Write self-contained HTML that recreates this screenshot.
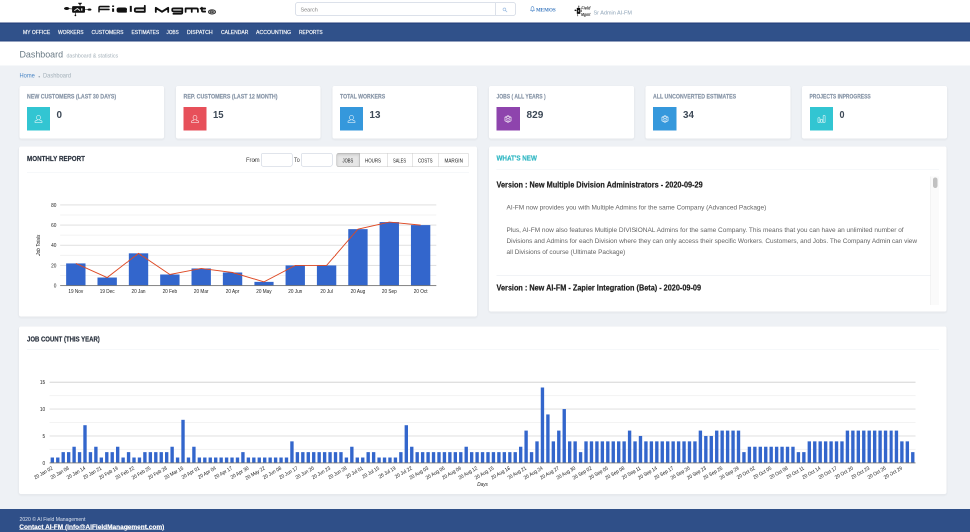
<!DOCTYPE html>
<html><head><meta charset="utf-8"><title>Dashboard</title>
<style>
html,body{margin:0;padding:0;width:970px;height:532px;overflow:hidden;background:#eef1f5;}
body{font-family:"Liberation Sans",sans-serif;}
#w{position:absolute;left:0;top:0;width:1940px;height:1064px;transform:scale(.5);transform-origin:0 0;overflow:hidden;will-change:transform;}
#w div{position:absolute;box-sizing:border-box;}
#w svg{position:absolute;overflow:visible;}
.t{position:absolute;white-space:nowrap;line-height:0;height:0;}
.p{background:#fff;box-shadow:0 2px 3px 2px rgba(0,0,0,.035);border-radius:4px;}
</style></head><body><div id="w">
<div style="left:0px;top:0px;width:1940px;height:44.6px;background:#fff;"></div>
<svg style="left:0;top:0" width="480" height="44" viewBox="0 0 240 22" fill="none" stroke="#111" stroke-linecap="round" stroke-linejoin="round">
<g stroke-width=".6"><path d="M66.7 8.5L72.2 8.9M85 9.5L89.5 9.6M80.1 3.8V6.2M75.4 12.8V15.2"/></g>
<ellipse cx="66.7" cy="8.5" rx="2.7" ry="1.5" fill="#111" stroke="none"/>
<ellipse cx="89.5" cy="9.6" rx="1.9" ry="1.05" fill="#111" stroke="none"/>
<path d="M78.3 3.0H81.9L80.1 4.9Z" fill="#111" stroke="#111" stroke-width=".4"/>
<circle cx="75.4" cy="15.4" r=".85" fill="#111" stroke="none"/>
<rect x="72.1" y="6.1" width="12.9" height="6.7" rx="1" fill="#111" stroke="none"/>
<path d="M74.3 10.8L77.4 8.5L80 10.6" stroke="#e8e8e8" stroke-width=".95" stroke-linecap="butt" stroke-linejoin="round"/><path d="M81.75 8.3V10.7" stroke="#fff" stroke-width="1.15" stroke-linecap="butt"/>
<g stroke-width="1.8" transform="translate(0 9.3) scale(1 1.1) translate(0 -9.3)">
<path d="M99 11.5V8.0Q99 6.85 100.2 6.85H109M99 9.45H109" stroke-width="1.45"/>
<path d="M113.1 8.5V11.6" stroke-width="2.0" stroke-linecap="butt"/>
<path d="M112.1 6.5H114.1" stroke-width="1.3" stroke-linecap="butt"/>
<path d="M126.2 11.5H118.9Q117.4 11.5 117.4 10.4V9.6Q117.4 8.5 118.9 8.5H124.7Q126.2 8.5 126.2 9.4V10H117.6" fill="#c8c8c8" stroke-width="1.6"/>
<path d="M130.8 6.2V11.6" stroke-width="2.0" stroke-linecap="butt"/>
<path d="M144.8 6.2V11.5H136.3Q134.8 11.5 134.8 10.4V9.6Q134.8 8.5 136.3 8.5H144.8"/>
<path d="M155.8 11.6V8L162 11.5L168.2 8V11.6" stroke-width="1.8"/>
<path d="M182.3 8.5H173.7Q172.2 8.5 172.2 9.5V10.2Q172.2 11.2 173.7 11.2H182.3V8.5V12.2Q182.3 13.3 180.8 13.3H173.4" stroke-width="1.7"/>
<path d="M185.6 11.6V8.5H196.5Q197.9 8.5 197.9 9.6V11.6M191.75 8.5V11.6" stroke-width="1.75"/>
<path d="M201.9 7.8V10.4Q201.9 11.4 203.1 11.4H205.2M200.6 8.6H205.2" stroke-width="1.7"/>
</g>
<ellipse cx="212" cy="11.9" rx="3.7" ry="2.2" fill="#9a9a9a" stroke="#222" stroke-width=".7"/>
<path d="M210.6 13V10.8H212.3Q213.2 10.8 213.2 11.45Q213.2 12.1 212.3 12.1H210.6M212.2 12.1L213.3 13" stroke="#222" stroke-width=".55"/>
</svg>

<div style="left:591px;top:5px;width:401.2px;height:26.2px;background:#fff;border:1px solid #bac4d6;border-radius:3px 0 0 3px;"></div>
<div style="left:991.2px;top:5px;width:40.2px;height:26.2px;background:#fff;border:1px solid #bac4d6;border-radius:0 3px 3px 0;"></div>
<span id="t1" class="t" style="left:601px;top:19.19px;font-size:11px;color:#858585;transform:scaleX(0.9926);transform-origin:0 0;">Search</span>
<svg style="left:1005.4px;top:14.6px" width="10" height="10" viewBox="0 0 10 10"><circle cx="3.8" cy="3.8" r="2.8" fill="none" stroke="#9dbde2" stroke-width="1.3"/><path d="M6 6L8.8 8.8" stroke="#9dbde2" stroke-width="1.5" stroke-linecap="round"/></svg>
<svg style="left:1059.6px;top:12.2px" width="10" height="12" viewBox="0 0 10 12"><path d="M5 1.3C3 1.3 2.2 2.9 2.2 4.7V7L1.1 8.9H8.9L7.8 7V4.7C7.8 2.9 7 1.3 5 1.3Z" fill="none" stroke="#4a86c9" stroke-width="1.1"/><path d="M3.9 10.1a1.1 1.1 0 0 0 2.2 0M5 .3V1.3" fill="none" stroke="#4a86c9" stroke-width="1"/></svg>
<span id="t2" class="t" style="left:1072.4px;top:19.83px;font-size:10.6px;color:#3a78bf;font-weight:700;font-family:'Liberation Serif',serif;transform:scaleX(0.9562);transform-origin:0 0;">MEMOS</span>
<svg style="left:1140px;top:0" width="60" height="40" viewBox="570 0 30 20" font-family="Liberation Sans, sans-serif">
<rect x="576.8" y="7.9" width="3.5" height="6" rx=".4" fill="#111"/>
<rect x="577.9" y="10.1" width="1.3" height="1.7" fill="#aaa"/>
<path d="M575.3 10.4H576.9M580.1 11H581.4M578.8 6.4V8.1M577.7 13.8V15.6" stroke="#222" stroke-width=".5"/>
<circle cx="575.3" cy="10.3" r=".8" fill="#111"/><circle cx="581.4" cy="11" r=".6" fill="#111"/>
<circle cx="578.8" cy="6.2" r=".6" fill="#333"/><circle cx="577.7" cy="15.7" r=".5" fill="#555"/>
<text transform="translate(581.3 9.4) scale(.8 1)" font-size="4.9" font-weight="700" font-style="italic" fill="#333">Field</text>
<text transform="translate(581.0 16.0) scale(.72 1)" font-size="4.9" font-weight="700" font-style="italic" fill="#333">Mgmt</text>
</svg>

<span id="t3" class="t" style="left:1187.2px;top:24.79px;font-size:11px;color:#8ea4b8;transform:scaleX(0.9996);transform-origin:0 0;">Sr Admin AI-FM</span>
<div style="left:0px;top:44.6px;width:1940px;height:38.8px;background:#30518a;border-top:2.6px solid #213c78;border-bottom:2px solid #27447f;"></div>
<span id="t4" class="t" style="left:45.8px;top:64.15px;font-size:11.4px;color:#fff;transform:scaleX(0.8801);transform-origin:0 0;-webkit-text-stroke:.3px #fff;">MY OFFICE</span>
<span id="t5" class="t" style="left:116.4px;top:64.15px;font-size:11.4px;color:#fff;transform:scaleX(0.8699);transform-origin:0 0;-webkit-text-stroke:.3px #fff;">WORKERS</span>
<span id="t6" class="t" style="left:182.8px;top:64.15px;font-size:11.4px;color:#fff;transform:scaleX(0.8818);transform-origin:0 0;-webkit-text-stroke:.3px #fff;">CUSTOMERS</span>
<span id="t7" class="t" style="left:262.6px;top:64.15px;font-size:11.4px;color:#fff;transform:scaleX(0.8694);transform-origin:0 0;-webkit-text-stroke:.3px #fff;">ESTIMATES</span>
<span id="t8" class="t" style="left:333.4px;top:64.15px;font-size:11.4px;color:#fff;transform:scaleX(0.8197);transform-origin:0 0;-webkit-text-stroke:.3px #fff;">JOBS</span>
<span id="t9" class="t" style="left:374.4px;top:64.15px;font-size:11.4px;color:#fff;transform:scaleX(0.9194);transform-origin:0 0;-webkit-text-stroke:.3px #fff;">DISPATCH</span>
<span id="t10" class="t" style="left:441.6px;top:64.15px;font-size:11.4px;color:#fff;transform:scaleX(0.8834);transform-origin:0 0;-webkit-text-stroke:.3px #fff;">CALENDAR</span>
<span id="t11" class="t" style="left:512px;top:64.15px;font-size:11.4px;color:#fff;transform:scaleX(0.9167);transform-origin:0 0;-webkit-text-stroke:.3px #fff;">ACCOUNTING</span>
<span id="t12" class="t" style="left:598px;top:64.15px;font-size:11.4px;color:#fff;transform:scaleX(0.8604);transform-origin:0 0;-webkit-text-stroke:.3px #fff;">REPORTS</span>
<div style="left:0px;top:83.4px;width:1940px;height:47.8px;background:#fff;"></div>
<span id="t13" class="t" style="left:39.3px;top:108.76px;font-size:18.3px;color:#6a7a85;transform:scaleX(0.9739);transform-origin:0 0;">Dashboard</span>
<span id="t14" class="t" style="left:132.6px;top:111.02px;font-size:11.5px;color:#a3b0b9;transform:scaleX(0.9172);transform-origin:0 0;">dashboard &amp; statistics</span>
<span id="t15" class="t" style="left:38.8px;top:150.94px;font-size:12px;color:#4a86c5;transform:scaleX(0.9589);transform-origin:0 0;">Home</span>
<div style="left:77.2px;top:152px;width:2.8px;height:2.8px;background:#9aa7b3;border-radius:50%;"></div>
<span id="t16" class="t" style="left:85.6px;top:150.94px;font-size:12px;color:#a3b0b9;transform:scaleX(0.9571);transform-origin:0 0;">Dashboard</span>
<div class="p" style="left:38.6px;top:171.6px;width:289.6px;height:105px;"></div>
<span id="t17" class="t" style="left:53.8px;top:192.84px;font-size:12px;color:#8896a8;font-weight:700;transform:scaleX(0.8801);transform-origin:0 0;-webkit-text-stroke:.35px #8896a8;">NEW CUSTOMERS (LAST 30 DAYS)</span>
<div style="left:54px;top:214.2px;width:46.2px;height:46.8px;background:#32c5d2;"></div>
<svg style="left:69.1px;top:229.9px" width="16" height="16" viewBox="0 0 16 16" fill="none" stroke="#fff" stroke-opacity=".85" stroke-width="1.25" stroke-linejoin="round"><ellipse cx="8" cy="5.2" rx="3.9" ry="4.5"/><path d="M5.6 8.9V10.3C5.6 11 1 11 1 12.7V15.1H15V12.7C15 11 10.4 11 10.4 10.3V8.9"/></svg>
<span id="t18" class="t" style="left:113.2px;top:229.03px;font-size:20.7px;color:#3d4957;font-weight:700;transform:scaleX(0.9552);transform-origin:0 0;">0</span>
<div class="p" style="left:351.72px;top:171.6px;width:289.6px;height:105px;"></div>
<span id="t19" class="t" style="left:366.92px;top:192.84px;font-size:12px;color:#8896a8;font-weight:700;transform:scaleX(0.8830);transform-origin:0 0;-webkit-text-stroke:.35px #8896a8;">REP. CUSTOMERS (LAST 12 MONTH)</span>
<div style="left:367.12px;top:214.2px;width:46.2px;height:46.8px;background:#e7505a;"></div>
<svg style="left:382.22px;top:229.9px" width="16" height="16" viewBox="0 0 16 16" fill="none" stroke="#fff" stroke-opacity=".85" stroke-width="1.25" stroke-linejoin="round"><ellipse cx="8" cy="5.2" rx="3.9" ry="4.5"/><path d="M5.6 8.9V10.3C5.6 11 1 11 1 12.7V15.1H15V12.7C15 11 10.4 11 10.4 10.3V8.9"/></svg>
<span id="t20" class="t" style="left:426.32px;top:229.03px;font-size:20.7px;color:#3d4957;font-weight:700;transform:scaleX(0.9211);transform-origin:0 0;">15</span>
<div class="p" style="left:664.84px;top:171.6px;width:289.6px;height:105px;"></div>
<span id="t21" class="t" style="left:680.04px;top:192.84px;font-size:12px;color:#8896a8;font-weight:700;transform:scaleX(0.8637);transform-origin:0 0;-webkit-text-stroke:.35px #8896a8;">TOTAL WORKERS</span>
<div style="left:680.24px;top:214.2px;width:46.2px;height:46.8px;background:#3598dc;"></div>
<svg style="left:695.34px;top:229.9px" width="16" height="16" viewBox="0 0 16 16" fill="none" stroke="#fff" stroke-opacity=".85" stroke-width="1.25" stroke-linejoin="round"><ellipse cx="8" cy="5.2" rx="3.9" ry="4.5"/><path d="M5.6 8.9V10.3C5.6 11 1 11 1 12.7V15.1H15V12.7C15 11 10.4 11 10.4 10.3V8.9"/></svg>
<span id="t22" class="t" style="left:739.44px;top:229.03px;font-size:20.7px;color:#3d4957;font-weight:700;transform:scaleX(0.9472);transform-origin:0 0;">13</span>
<div class="p" style="left:977.96px;top:171.6px;width:289.6px;height:105px;"></div>
<span id="t23" class="t" style="left:993.16px;top:192.84px;font-size:12px;color:#8896a8;font-weight:700;transform:scaleX(0.8353);transform-origin:0 0;-webkit-text-stroke:.35px #8896a8;">JOBS ( ALL YEARS )</span>
<div style="left:993.36px;top:214.2px;width:46.2px;height:46.8px;background:#8e44ad;"></div>
<svg style="left:1008.46px;top:229.9px" width="16" height="16" viewBox="0 0 16 16" fill="none" stroke="#fff" stroke-opacity=".85" stroke-width="1.25" stroke-linejoin="round"><path d="M8 1L14.2 4.2V11.8L8 15L1.8 11.8V4.2Z"/><path d="M3.2 5.2L8 7.6L12.8 5.2L8 2.9Z"/><path d="M3.2 8.3L8 10.7L12.8 8.3"/><path d="M3.2 11.2L8 13.5L12.8 11.2"/></svg>
<span id="t24" class="t" style="left:1052.56px;top:229.03px;font-size:20.7px;color:#3d4957;font-weight:700;transform:scaleX(0.9730);transform-origin:0 0;">829</span>
<div class="p" style="left:1291.08px;top:171.6px;width:289.6px;height:105px;"></div>
<span id="t25" class="t" style="left:1306.28px;top:192.84px;font-size:12px;color:#8896a8;font-weight:700;transform:scaleX(0.8737);transform-origin:0 0;-webkit-text-stroke:.35px #8896a8;">ALL UNCONVERTED ESTIMATES</span>
<div style="left:1306.48px;top:214.2px;width:46.2px;height:46.8px;background:#3598dc;"></div>
<svg style="left:1321.58px;top:229.9px" width="16" height="16" viewBox="0 0 16 16" fill="none" stroke="#fff" stroke-opacity=".85" stroke-width="1.25" stroke-linejoin="round"><path d="M8 1L14.2 4.2V11.8L8 15L1.8 11.8V4.2Z"/><path d="M3.2 5.2L8 7.6L12.8 5.2L8 2.9Z"/><path d="M3.2 8.3L8 10.7L12.8 8.3"/><path d="M3.2 11.2L8 13.5L12.8 11.2"/></svg>
<span id="t26" class="t" style="left:1365.68px;top:229.03px;font-size:20.7px;color:#3d4957;font-weight:700;transform:scaleX(0.9472);transform-origin:0 0;">34</span>
<div class="p" style="left:1604.2px;top:171.6px;width:289.6px;height:105px;"></div>
<span id="t27" class="t" style="left:1619.4px;top:192.84px;font-size:12px;color:#8896a8;font-weight:700;transform:scaleX(0.8269);transform-origin:0 0;-webkit-text-stroke:.35px #8896a8;">PROJECTS INPROGRESS</span>
<div style="left:1619.6px;top:214.2px;width:46.2px;height:46.8px;background:#32c5d2;"></div>
<svg style="left:1634.7px;top:229.9px" width="16" height="16" viewBox="0 0 16 16" fill="none" stroke="#fff" stroke-opacity=".85" stroke-width="1.25" stroke-linejoin="round"><rect x="0.9" y="5.3" width="3.9" height="9.8" rx="1.2"/><rect x="6.1" y="8.7" width="3.9" height="6.4" rx="1.2"/><rect x="11.3" y="0.9" width="3.9" height="14.2" rx="1.2"/></svg>
<span id="t28" class="t" style="left:1678.8px;top:229.03px;font-size:20.7px;color:#3d4957;font-weight:700;transform:scaleX(0.8684);transform-origin:0 0;">0</span>
<div class="p" style="left:38.4px;top:293.4px;width:915.8px;height:339.8px;"></div>
<span id="t29" class="t" style="left:53.6px;top:316.95px;font-size:14px;color:#2c3440;font-weight:700;transform:scaleX(0.8930);transform-origin:0 0;-webkit-text-stroke:.4px #2c3440;">MONTHLY REPORT</span>
<div style="left:53.6px;top:343.8px;width:884.8px;height:1.2px;background:#eef1f5;"></div>
<span id="t30" class="t" style="left:492.4px;top:320.07px;font-size:12.5px;color:#444;transform:scaleX(0.9324);transform-origin:0 0;">From</span>
<div style="left:522px;top:306.4px;width:63px;height:26.4px;background:#fff;border:1px solid #c2cad8;border-radius:4px;"></div>
<span id="t31" class="t" style="left:588.4px;top:320.07px;font-size:12.5px;color:#444;transform:scaleX(0.8634);transform-origin:0 0;">To</span>
<div style="left:602.2px;top:306.4px;width:63px;height:26.4px;background:#fff;border:1px solid #c2cad8;border-radius:4px;"></div>
<div style="left:672.6px;top:306.4px;width:47px;height:27.2px;background:#e6e6e6;border:1px solid #adadad;box-shadow:inset 0 3px 5px rgba(0,0,0,.125);border-radius:4px 0 0 4px;"></div>
<div style="left:719.6px;top:306.4px;width:56px;height:27.2px;background:#fff;border:1px solid #ccc;border-left:none;"></div>
<div style="left:775.6px;top:306.4px;width:50px;height:27.2px;background:#fff;border:1px solid #ccc;border-left:none;"></div>
<div style="left:825.6px;top:306.4px;width:52px;height:27.2px;background:#fff;border:1px solid #ccc;border-left:none;"></div>
<div style="left:877.6px;top:306.4px;width:60.8px;height:27.2px;background:#fff;border:1px solid #ccc;border-radius:0 4px 4px 0;border-left:none;"></div>
<span id="t32" class="t" style="left:685.4px;top:321.16px;font-size:10.5px;color:#222;transform:scaleX(0.7872);transform-origin:0 0;">JOBS</span>
<span id="t33" class="t" style="left:730.2px;top:321.16px;font-size:10.5px;color:#222;transform:scaleX(0.8438);transform-origin:0 0;">HOURS</span>
<span id="t34" class="t" style="left:786.2px;top:321.16px;font-size:10.5px;color:#222;transform:scaleX(0.7738);transform-origin:0 0;">SALES</span>
<span id="t35" class="t" style="left:836.4px;top:321.16px;font-size:10.5px;color:#222;transform:scaleX(0.8017);transform-origin:0 0;">COSTS</span>
<span id="t36" class="t" style="left:889.2px;top:321.16px;font-size:10.5px;color:#222;transform:scaleX(0.8762);transform-origin:0 0;">MARGIN</span>
<svg style="left:0;top:0" width="1940" height="700" font-family="Liberation Sans, sans-serif"><rect x="120.30" y="550.03" width="752.30" height="2" fill="#f3f3f3"/><rect x="120.30" y="529.86" width="752.30" height="2" fill="#e0e0e0"/><rect x="120.30" y="509.69" width="752.30" height="2" fill="#f3f3f3"/><rect x="120.30" y="489.52" width="752.30" height="2" fill="#e0e0e0"/><rect x="120.30" y="469.35" width="752.30" height="2" fill="#f3f3f3"/><rect x="120.30" y="449.18" width="752.30" height="2" fill="#e0e0e0"/><rect x="120.30" y="429.01" width="752.30" height="2" fill="#f3f3f3"/><rect x="120.30" y="408.84" width="752.30" height="2" fill="#e0e0e0"/><rect x="132.27" y="526.83" width="38.74" height="44.37" fill="#3366cc"/><rect x="194.97" y="555.06" width="38.74" height="16.14" fill="#3366cc"/><rect x="257.66" y="506.66" width="38.74" height="64.54" fill="#3366cc"/><rect x="320.35" y="549.01" width="38.74" height="22.19" fill="#3366cc"/><rect x="383.04" y="536.91" width="38.74" height="34.29" fill="#3366cc"/><rect x="445.73" y="544.98" width="38.74" height="26.22" fill="#3366cc"/><rect x="508.42" y="563.74" width="38.74" height="7.46" fill="#3366cc"/><rect x="571.12" y="530.86" width="38.74" height="40.34" fill="#3366cc"/><rect x="633.81" y="530.86" width="38.74" height="40.34" fill="#3366cc"/><rect x="696.50" y="458.25" width="38.74" height="112.95" fill="#3366cc"/><rect x="759.19" y="444.13" width="38.74" height="127.07" fill="#3366cc"/><rect x="821.88" y="450.18" width="38.74" height="121.02" fill="#3366cc"/><rect x="120.30" y="570.30" width="752.30" height="1.8" fill="#777"/><polyline points="151.65,526.83 214.34,555.06 277.03,506.66 339.72,549.01 402.41,536.91 465.10,544.98 527.80,563.74 590.49,530.86 653.18,530.86 715.87,458.25 778.56,444.13 841.25,450.18" fill="none" stroke="#de4a25" stroke-width="1.9"/><text transform="translate(151.65 585.80) scale(.9 1)" text-anchor="middle" font-size="10.4" fill="#222">19 Nov</text><text transform="translate(214.34 585.80) scale(.9 1)" text-anchor="middle" font-size="10.4" fill="#222">19 Dec</text><text transform="translate(277.03 585.80) scale(.9 1)" text-anchor="middle" font-size="10.4" fill="#222">20 Jan</text><text transform="translate(339.72 585.80) scale(.9 1)" text-anchor="middle" font-size="10.4" fill="#222">20 Feb</text><text transform="translate(402.41 585.80) scale(.9 1)" text-anchor="middle" font-size="10.4" fill="#222">20 Mar</text><text transform="translate(465.10 585.80) scale(.9 1)" text-anchor="middle" font-size="10.4" fill="#222">20 Apr</text><text transform="translate(527.80 585.80) scale(.9 1)" text-anchor="middle" font-size="10.4" fill="#222">20 May</text><text transform="translate(590.49 585.80) scale(.9 1)" text-anchor="middle" font-size="10.4" fill="#222">20 Jun</text><text transform="translate(653.18 585.80) scale(.9 1)" text-anchor="middle" font-size="10.4" fill="#222">20 Jul</text><text transform="translate(715.87 585.80) scale(.9 1)" text-anchor="middle" font-size="10.4" fill="#222">20 Aug</text><text transform="translate(778.56 585.80) scale(.9 1)" text-anchor="middle" font-size="10.4" fill="#222">20 Sep</text><text transform="translate(841.25 585.80) scale(.9 1)" text-anchor="middle" font-size="10.4" fill="#222">20 Oct</text><text transform="translate(112.80 574.90) scale(.9 1)" text-anchor="end" font-size="10.6" fill="#222">0</text><text transform="translate(112.80 534.56) scale(.9 1)" text-anchor="end" font-size="10.6" fill="#222">20</text><text transform="translate(112.80 494.22) scale(.9 1)" text-anchor="end" font-size="10.6" fill="#222">40</text><text transform="translate(112.80 453.88) scale(.9 1)" text-anchor="end" font-size="10.6" fill="#222">60</text><text transform="translate(112.80 413.54) scale(.9 1)" text-anchor="end" font-size="10.6" fill="#222">80</text><text transform="translate(80.20 490.40) rotate(-90) scale(.9 1)" text-anchor="middle" font-size="10.4" font-style="italic" fill="#222">Job Totals</text></svg>
<div class="p" style="left:977.8px;top:293.4px;width:915.6px;height:329.8px;"></div>
<span id="t37" class="t" style="left:993.2px;top:316.35px;font-size:14px;color:#32b8c4;font-weight:700;transform:scaleX(0.8961);transform-origin:0 0;-webkit-text-stroke:.4px #32b8c4;">WHAT'S NEW</span>
<div style="left:993.2px;top:338px;width:885px;height:1.2px;background:#eef1f5;"></div>
<div style="left:1860.8px;top:352.8px;width:17.4px;height:257.2px;background:#fafafa;border-left:1px solid #e8e8e8;"></div>
<div style="left:1865.8px;top:354.6px;width:9px;height:21px;background:#c1c1c1;border-radius:5px;"></div>
<span id="t38" class="t" style="left:993.2px;top:369.66px;font-size:16px;color:#222;font-weight:700;transform:scaleX(0.9160);transform-origin:0 0;-webkit-text-stroke:.4px #222;">Version : New Multiple Division Administrators - 2020-09-29</span>
<span id="t39" class="t" style="left:1013px;top:415.30px;font-size:13px;color:#646464;transform:scaleX(0.9974);transform-origin:0 0;">AI-FM now provides you with Multiple Admins for the same Company (Advanced Package)</span>
<span id="t40" class="t" style="left:1013px;top:459.90px;font-size:13px;color:#646464;letter-spacing:0.003px;">Plus, AI-FM now also features Multiple DIVISIONAL Admins for the same Company. This means that you can have an unlimited number of</span>
<span id="t41" class="t" style="left:1013px;top:481.70px;font-size:13px;color:#646464;transform:scaleX(0.9930);transform-origin:0 0;">Divisions and Admins for each Division where they can only access their specific Workers, Customers, and Jobs. The Company Admin can view</span>
<span id="t42" class="t" style="left:1013px;top:504.10px;font-size:13px;color:#646464;transform:scaleX(0.9905);transform-origin:0 0;">all Divisions of course (Ultimate Package)</span>
<div style="left:993.2px;top:549.6px;width:867.6px;height:1.2px;background:#e4e8ee;"></div>
<span id="t43" class="t" style="left:993.2px;top:575.86px;font-size:16px;color:#222;font-weight:700;transform:scaleX(0.9122);transform-origin:0 0;-webkit-text-stroke:.4px #222;">Version : New AI-FM - Zapier Integration (Beta) - 2020-09-09</span>
<div class="p" style="left:38.4px;top:653.4px;width:1855px;height:334.6px;"></div>
<span id="t44" class="t" style="left:53.6px;top:677.55px;font-size:14px;color:#2c3440;font-weight:700;transform:scaleX(0.8560);transform-origin:0 0;-webkit-text-stroke:.4px #2c3440;">JOB COUNT (THIS YEAR)</span>
<div style="left:53.6px;top:697.8px;width:1824.6px;height:1.2px;background:#eef1f5;"></div>
<svg style="left:0;top:0" width="1940" height="1064" font-family="Liberation Sans, sans-serif"><rect x="99.20" y="897.88" width="1731.80" height="2" fill="#f3f3f3"/><rect x="99.20" y="870.95" width="1731.80" height="2" fill="#e0e0e0"/><rect x="99.20" y="844.02" width="1731.80" height="2" fill="#f3f3f3"/><rect x="99.20" y="817.10" width="1731.80" height="2" fill="#e0e0e0"/><rect x="99.20" y="790.17" width="1731.80" height="2" fill="#f3f3f3"/><rect x="99.20" y="763.25" width="1731.80" height="2" fill="#e0e0e0"/><rect x="101.28" y="915.03" width="6.73" height="10.77" fill="#3366cc"/><rect x="112.17" y="915.03" width="6.73" height="10.77" fill="#3366cc"/><rect x="123.06" y="904.26" width="6.73" height="21.54" fill="#3366cc"/><rect x="133.96" y="904.26" width="6.73" height="21.54" fill="#3366cc"/><rect x="144.85" y="893.49" width="6.73" height="32.31" fill="#3366cc"/><rect x="155.74" y="904.26" width="6.73" height="21.54" fill="#3366cc"/><rect x="166.63" y="850.41" width="6.73" height="75.39" fill="#3366cc"/><rect x="177.52" y="904.26" width="6.73" height="21.54" fill="#3366cc"/><rect x="188.41" y="893.49" width="6.73" height="32.31" fill="#3366cc"/><rect x="199.31" y="915.03" width="6.73" height="10.77" fill="#3366cc"/><rect x="210.20" y="904.26" width="6.73" height="21.54" fill="#3366cc"/><rect x="221.09" y="904.26" width="6.73" height="21.54" fill="#3366cc"/><rect x="231.98" y="893.49" width="6.73" height="32.31" fill="#3366cc"/><rect x="242.87" y="915.03" width="6.73" height="10.77" fill="#3366cc"/><rect x="253.77" y="904.26" width="6.73" height="21.54" fill="#3366cc"/><rect x="264.66" y="915.03" width="6.73" height="10.77" fill="#3366cc"/><rect x="275.55" y="915.03" width="6.73" height="10.77" fill="#3366cc"/><rect x="286.44" y="904.26" width="6.73" height="21.54" fill="#3366cc"/><rect x="297.33" y="904.26" width="6.73" height="21.54" fill="#3366cc"/><rect x="308.22" y="904.26" width="6.73" height="21.54" fill="#3366cc"/><rect x="319.12" y="904.26" width="6.73" height="21.54" fill="#3366cc"/><rect x="330.01" y="904.26" width="6.73" height="21.54" fill="#3366cc"/><rect x="340.90" y="893.49" width="6.73" height="32.31" fill="#3366cc"/><rect x="351.79" y="915.03" width="6.73" height="10.77" fill="#3366cc"/><rect x="362.68" y="839.64" width="6.73" height="86.16" fill="#3366cc"/><rect x="373.58" y="915.03" width="6.73" height="10.77" fill="#3366cc"/><rect x="384.47" y="893.49" width="6.73" height="32.31" fill="#3366cc"/><rect x="395.36" y="915.03" width="6.73" height="10.77" fill="#3366cc"/><rect x="406.25" y="915.03" width="6.73" height="10.77" fill="#3366cc"/><rect x="417.14" y="915.03" width="6.73" height="10.77" fill="#3366cc"/><rect x="428.04" y="915.03" width="6.73" height="10.77" fill="#3366cc"/><rect x="438.93" y="915.03" width="6.73" height="10.77" fill="#3366cc"/><rect x="449.82" y="915.03" width="6.73" height="10.77" fill="#3366cc"/><rect x="460.71" y="915.03" width="6.73" height="10.77" fill="#3366cc"/><rect x="471.60" y="915.03" width="6.73" height="10.77" fill="#3366cc"/><rect x="482.49" y="904.26" width="6.73" height="21.54" fill="#3366cc"/><rect x="493.39" y="915.03" width="6.73" height="10.77" fill="#3366cc"/><rect x="504.28" y="915.03" width="6.73" height="10.77" fill="#3366cc"/><rect x="515.17" y="915.03" width="6.73" height="10.77" fill="#3366cc"/><rect x="526.06" y="915.03" width="6.73" height="10.77" fill="#3366cc"/><rect x="536.95" y="915.03" width="6.73" height="10.77" fill="#3366cc"/><rect x="547.85" y="915.03" width="6.73" height="10.77" fill="#3366cc"/><rect x="558.74" y="915.03" width="6.73" height="10.77" fill="#3366cc"/><rect x="569.63" y="915.03" width="6.73" height="10.77" fill="#3366cc"/><rect x="580.52" y="882.72" width="6.73" height="43.08" fill="#3366cc"/><rect x="591.41" y="904.26" width="6.73" height="21.54" fill="#3366cc"/><rect x="602.30" y="904.26" width="6.73" height="21.54" fill="#3366cc"/><rect x="613.20" y="904.26" width="6.73" height="21.54" fill="#3366cc"/><rect x="624.09" y="904.26" width="6.73" height="21.54" fill="#3366cc"/><rect x="634.98" y="904.26" width="6.73" height="21.54" fill="#3366cc"/><rect x="645.87" y="904.26" width="6.73" height="21.54" fill="#3366cc"/><rect x="656.76" y="904.26" width="6.73" height="21.54" fill="#3366cc"/><rect x="667.66" y="904.26" width="6.73" height="21.54" fill="#3366cc"/><rect x="678.55" y="904.26" width="6.73" height="21.54" fill="#3366cc"/><rect x="689.44" y="915.03" width="6.73" height="10.77" fill="#3366cc"/><rect x="700.33" y="893.49" width="6.73" height="32.31" fill="#3366cc"/><rect x="711.22" y="915.03" width="6.73" height="10.77" fill="#3366cc"/><rect x="722.11" y="915.03" width="6.73" height="10.77" fill="#3366cc"/><rect x="733.01" y="904.26" width="6.73" height="21.54" fill="#3366cc"/><rect x="743.90" y="904.26" width="6.73" height="21.54" fill="#3366cc"/><rect x="754.79" y="915.03" width="6.73" height="10.77" fill="#3366cc"/><rect x="765.68" y="915.03" width="6.73" height="10.77" fill="#3366cc"/><rect x="776.57" y="915.03" width="6.73" height="10.77" fill="#3366cc"/><rect x="787.47" y="915.03" width="6.73" height="10.77" fill="#3366cc"/><rect x="798.36" y="904.26" width="6.73" height="21.54" fill="#3366cc"/><rect x="809.25" y="850.41" width="6.73" height="75.39" fill="#3366cc"/><rect x="820.14" y="893.49" width="6.73" height="32.31" fill="#3366cc"/><rect x="831.03" y="904.26" width="6.73" height="21.54" fill="#3366cc"/><rect x="841.92" y="904.26" width="6.73" height="21.54" fill="#3366cc"/><rect x="852.82" y="904.26" width="6.73" height="21.54" fill="#3366cc"/><rect x="863.71" y="904.26" width="6.73" height="21.54" fill="#3366cc"/><rect x="874.60" y="904.26" width="6.73" height="21.54" fill="#3366cc"/><rect x="885.49" y="904.26" width="6.73" height="21.54" fill="#3366cc"/><rect x="896.38" y="904.26" width="6.73" height="21.54" fill="#3366cc"/><rect x="907.28" y="904.26" width="6.73" height="21.54" fill="#3366cc"/><rect x="918.17" y="904.26" width="6.73" height="21.54" fill="#3366cc"/><rect x="929.06" y="893.49" width="6.73" height="32.31" fill="#3366cc"/><rect x="939.95" y="904.26" width="6.73" height="21.54" fill="#3366cc"/><rect x="950.84" y="904.26" width="6.73" height="21.54" fill="#3366cc"/><rect x="961.73" y="904.26" width="6.73" height="21.54" fill="#3366cc"/><rect x="972.63" y="904.26" width="6.73" height="21.54" fill="#3366cc"/><rect x="983.52" y="904.26" width="6.73" height="21.54" fill="#3366cc"/><rect x="994.41" y="904.26" width="6.73" height="21.54" fill="#3366cc"/><rect x="1005.30" y="904.26" width="6.73" height="21.54" fill="#3366cc"/><rect x="1016.19" y="904.26" width="6.73" height="21.54" fill="#3366cc"/><rect x="1027.09" y="904.26" width="6.73" height="21.54" fill="#3366cc"/><rect x="1037.98" y="893.49" width="6.73" height="32.31" fill="#3366cc"/><rect x="1048.87" y="861.18" width="6.73" height="64.62" fill="#3366cc"/><rect x="1059.76" y="904.26" width="6.73" height="21.54" fill="#3366cc"/><rect x="1070.65" y="882.72" width="6.73" height="43.08" fill="#3366cc"/><rect x="1081.54" y="775.02" width="6.73" height="150.78" fill="#3366cc"/><rect x="1092.44" y="828.87" width="6.73" height="96.93" fill="#3366cc"/><rect x="1103.33" y="882.72" width="6.73" height="43.08" fill="#3366cc"/><rect x="1114.22" y="861.18" width="6.73" height="64.62" fill="#3366cc"/><rect x="1125.11" y="818.10" width="6.73" height="107.70" fill="#3366cc"/><rect x="1136.00" y="882.72" width="6.73" height="43.08" fill="#3366cc"/><rect x="1146.90" y="882.72" width="6.73" height="43.08" fill="#3366cc"/><rect x="1157.79" y="904.26" width="6.73" height="21.54" fill="#3366cc"/><rect x="1168.68" y="882.72" width="6.73" height="43.08" fill="#3366cc"/><rect x="1179.57" y="882.72" width="6.73" height="43.08" fill="#3366cc"/><rect x="1190.46" y="882.72" width="6.73" height="43.08" fill="#3366cc"/><rect x="1201.35" y="882.72" width="6.73" height="43.08" fill="#3366cc"/><rect x="1212.25" y="882.72" width="6.73" height="43.08" fill="#3366cc"/><rect x="1223.14" y="882.72" width="6.73" height="43.08" fill="#3366cc"/><rect x="1234.03" y="882.72" width="6.73" height="43.08" fill="#3366cc"/><rect x="1244.92" y="882.72" width="6.73" height="43.08" fill="#3366cc"/><rect x="1255.81" y="861.18" width="6.73" height="64.62" fill="#3366cc"/><rect x="1266.71" y="882.72" width="6.73" height="43.08" fill="#3366cc"/><rect x="1277.60" y="871.95" width="6.73" height="53.85" fill="#3366cc"/><rect x="1288.49" y="882.72" width="6.73" height="43.08" fill="#3366cc"/><rect x="1299.38" y="882.72" width="6.73" height="43.08" fill="#3366cc"/><rect x="1310.27" y="882.72" width="6.73" height="43.08" fill="#3366cc"/><rect x="1321.16" y="882.72" width="6.73" height="43.08" fill="#3366cc"/><rect x="1332.06" y="882.72" width="6.73" height="43.08" fill="#3366cc"/><rect x="1342.95" y="882.72" width="6.73" height="43.08" fill="#3366cc"/><rect x="1353.84" y="882.72" width="6.73" height="43.08" fill="#3366cc"/><rect x="1364.73" y="882.72" width="6.73" height="43.08" fill="#3366cc"/><rect x="1375.62" y="882.72" width="6.73" height="43.08" fill="#3366cc"/><rect x="1386.52" y="882.72" width="6.73" height="43.08" fill="#3366cc"/><rect x="1397.41" y="861.18" width="6.73" height="64.62" fill="#3366cc"/><rect x="1408.30" y="871.95" width="6.73" height="53.85" fill="#3366cc"/><rect x="1419.19" y="871.95" width="6.73" height="53.85" fill="#3366cc"/><rect x="1430.08" y="861.18" width="6.73" height="64.62" fill="#3366cc"/><rect x="1440.97" y="861.18" width="6.73" height="64.62" fill="#3366cc"/><rect x="1451.87" y="861.18" width="6.73" height="64.62" fill="#3366cc"/><rect x="1462.76" y="861.18" width="6.73" height="64.62" fill="#3366cc"/><rect x="1473.65" y="861.18" width="6.73" height="64.62" fill="#3366cc"/><rect x="1484.54" y="904.26" width="6.73" height="21.54" fill="#3366cc"/><rect x="1495.43" y="893.49" width="6.73" height="32.31" fill="#3366cc"/><rect x="1506.33" y="893.49" width="6.73" height="32.31" fill="#3366cc"/><rect x="1517.22" y="893.49" width="6.73" height="32.31" fill="#3366cc"/><rect x="1528.11" y="893.49" width="6.73" height="32.31" fill="#3366cc"/><rect x="1539.00" y="893.49" width="6.73" height="32.31" fill="#3366cc"/><rect x="1549.89" y="893.49" width="6.73" height="32.31" fill="#3366cc"/><rect x="1560.78" y="893.49" width="6.73" height="32.31" fill="#3366cc"/><rect x="1571.68" y="893.49" width="6.73" height="32.31" fill="#3366cc"/><rect x="1582.57" y="893.49" width="6.73" height="32.31" fill="#3366cc"/><rect x="1593.46" y="904.26" width="6.73" height="21.54" fill="#3366cc"/><rect x="1604.35" y="904.26" width="6.73" height="21.54" fill="#3366cc"/><rect x="1615.24" y="882.72" width="6.73" height="43.08" fill="#3366cc"/><rect x="1626.14" y="882.72" width="6.73" height="43.08" fill="#3366cc"/><rect x="1637.03" y="882.72" width="6.73" height="43.08" fill="#3366cc"/><rect x="1647.92" y="882.72" width="6.73" height="43.08" fill="#3366cc"/><rect x="1658.81" y="882.72" width="6.73" height="43.08" fill="#3366cc"/><rect x="1669.70" y="882.72" width="6.73" height="43.08" fill="#3366cc"/><rect x="1680.59" y="882.72" width="6.73" height="43.08" fill="#3366cc"/><rect x="1691.49" y="861.18" width="6.73" height="64.62" fill="#3366cc"/><rect x="1702.38" y="861.18" width="6.73" height="64.62" fill="#3366cc"/><rect x="1713.27" y="861.18" width="6.73" height="64.62" fill="#3366cc"/><rect x="1724.16" y="861.18" width="6.73" height="64.62" fill="#3366cc"/><rect x="1735.05" y="861.18" width="6.73" height="64.62" fill="#3366cc"/><rect x="1745.95" y="861.18" width="6.73" height="64.62" fill="#3366cc"/><rect x="1756.84" y="861.18" width="6.73" height="64.62" fill="#3366cc"/><rect x="1767.73" y="861.18" width="6.73" height="64.62" fill="#3366cc"/><rect x="1778.62" y="861.18" width="6.73" height="64.62" fill="#3366cc"/><rect x="1789.51" y="861.18" width="6.73" height="64.62" fill="#3366cc"/><rect x="1800.40" y="882.72" width="6.73" height="43.08" fill="#3366cc"/><rect x="1811.30" y="882.72" width="6.73" height="43.08" fill="#3366cc"/><rect x="1822.19" y="904.26" width="6.73" height="21.54" fill="#3366cc"/><rect x="99.20" y="924.90" width="1731.80" height="1.8" fill="#777"/><text transform="translate(90.40 929.50) scale(.9 1)" text-anchor="end" font-size="10.6" fill="#222">0</text><text transform="translate(90.40 875.65) scale(.9 1)" text-anchor="end" font-size="10.6" fill="#222">5</text><text transform="translate(90.40 821.80) scale(.9 1)" text-anchor="end" font-size="10.6" fill="#222">10</text><text transform="translate(90.40 767.95) scale(.9 1)" text-anchor="end" font-size="10.6" fill="#222">15</text><text transform="translate(106.05 938.20) rotate(-30) scale(.9 1)" text-anchor="end" font-size="10.4" fill="#222">20 Jan 02</text><text transform="translate(138.72 938.20) rotate(-30) scale(.9 1)" text-anchor="end" font-size="10.4" fill="#222">20 Jan 08</text><text transform="translate(171.40 938.20) rotate(-30) scale(.9 1)" text-anchor="end" font-size="10.4" fill="#222">20 Jan 14</text><text transform="translate(204.07 938.20) rotate(-30) scale(.9 1)" text-anchor="end" font-size="10.4" fill="#222">20 Jan 21</text><text transform="translate(236.75 938.20) rotate(-30) scale(.9 1)" text-anchor="end" font-size="10.4" fill="#222">20 Feb 19</text><text transform="translate(269.42 938.20) rotate(-30) scale(.9 1)" text-anchor="end" font-size="10.4" fill="#222">20 Feb 22</text><text transform="translate(302.10 938.20) rotate(-30) scale(.9 1)" text-anchor="end" font-size="10.4" fill="#222">20 Feb 25</text><text transform="translate(334.77 938.20) rotate(-30) scale(.9 1)" text-anchor="end" font-size="10.4" fill="#222">20 Feb 28</text><text transform="translate(367.45 938.20) rotate(-30) scale(.9 1)" text-anchor="end" font-size="10.4" fill="#222">20 Mar 16</text><text transform="translate(400.13 938.20) rotate(-30) scale(.9 1)" text-anchor="end" font-size="10.4" fill="#222">20 Apr 01</text><text transform="translate(432.80 938.20) rotate(-30) scale(.9 1)" text-anchor="end" font-size="10.4" fill="#222">20 Apr 04</text><text transform="translate(465.48 938.20) rotate(-30) scale(.9 1)" text-anchor="end" font-size="10.4" fill="#222">20 Apr 17</text><text transform="translate(498.15 938.20) rotate(-30) scale(.9 1)" text-anchor="end" font-size="10.4" fill="#222">20 Apr 30</text><text transform="translate(530.83 938.20) rotate(-30) scale(.9 1)" text-anchor="end" font-size="10.4" fill="#222">20 May 22</text><text transform="translate(563.50 938.20) rotate(-30) scale(.9 1)" text-anchor="end" font-size="10.4" fill="#222">20 Jun 08</text><text transform="translate(596.18 938.20) rotate(-30) scale(.9 1)" text-anchor="end" font-size="10.4" fill="#222">20 Jun 17</text><text transform="translate(628.85 938.20) rotate(-30) scale(.9 1)" text-anchor="end" font-size="10.4" fill="#222">20 Jun 20</text><text transform="translate(661.53 938.20) rotate(-30) scale(.9 1)" text-anchor="end" font-size="10.4" fill="#222">20 Jun 23</text><text transform="translate(694.20 938.20) rotate(-30) scale(.9 1)" text-anchor="end" font-size="10.4" fill="#222">20 Jun 28</text><text transform="translate(726.88 938.20) rotate(-30) scale(.9 1)" text-anchor="end" font-size="10.4" fill="#222">20 Jul 01</text><text transform="translate(759.56 938.20) rotate(-30) scale(.9 1)" text-anchor="end" font-size="10.4" fill="#222">20 Jul 15</text><text transform="translate(792.23 938.20) rotate(-30) scale(.9 1)" text-anchor="end" font-size="10.4" fill="#222">20 Jul 19</text><text transform="translate(824.91 938.20) rotate(-30) scale(.9 1)" text-anchor="end" font-size="10.4" fill="#222">20 Jul 22</text><text transform="translate(857.58 938.20) rotate(-30) scale(.9 1)" text-anchor="end" font-size="10.4" fill="#222">20 Aug 03</text><text transform="translate(890.26 938.20) rotate(-30) scale(.9 1)" text-anchor="end" font-size="10.4" fill="#222">20 Aug 06</text><text transform="translate(922.93 938.20) rotate(-30) scale(.9 1)" text-anchor="end" font-size="10.4" fill="#222">20 Aug 09</text><text transform="translate(955.61 938.20) rotate(-30) scale(.9 1)" text-anchor="end" font-size="10.4" fill="#222">20 Aug 12</text><text transform="translate(988.28 938.20) rotate(-30) scale(.9 1)" text-anchor="end" font-size="10.4" fill="#222">20 Aug 15</text><text transform="translate(1020.96 938.20) rotate(-30) scale(.9 1)" text-anchor="end" font-size="10.4" fill="#222">20 Aug 18</text><text transform="translate(1053.63 938.20) rotate(-30) scale(.9 1)" text-anchor="end" font-size="10.4" fill="#222">20 Aug 21</text><text transform="translate(1086.31 938.20) rotate(-30) scale(.9 1)" text-anchor="end" font-size="10.4" fill="#222">20 Aug 24</text><text transform="translate(1118.99 938.20) rotate(-30) scale(.9 1)" text-anchor="end" font-size="10.4" fill="#222">20 Aug 27</text><text transform="translate(1151.66 938.20) rotate(-30) scale(.9 1)" text-anchor="end" font-size="10.4" fill="#222">20 Aug 30</text><text transform="translate(1184.34 938.20) rotate(-30) scale(.9 1)" text-anchor="end" font-size="10.4" fill="#222">20 Sep 02</text><text transform="translate(1217.01 938.20) rotate(-30) scale(.9 1)" text-anchor="end" font-size="10.4" fill="#222">20 Sep 05</text><text transform="translate(1249.69 938.20) rotate(-30) scale(.9 1)" text-anchor="end" font-size="10.4" fill="#222">20 Sep 08</text><text transform="translate(1282.36 938.20) rotate(-30) scale(.9 1)" text-anchor="end" font-size="10.4" fill="#222">20 Sep 11</text><text transform="translate(1315.04 938.20) rotate(-30) scale(.9 1)" text-anchor="end" font-size="10.4" fill="#222">20 Sep 14</text><text transform="translate(1347.71 938.20) rotate(-30) scale(.9 1)" text-anchor="end" font-size="10.4" fill="#222">20 Sep 17</text><text transform="translate(1380.39 938.20) rotate(-30) scale(.9 1)" text-anchor="end" font-size="10.4" fill="#222">20 Sep 20</text><text transform="translate(1413.06 938.20) rotate(-30) scale(.9 1)" text-anchor="end" font-size="10.4" fill="#222">20 Sep 23</text><text transform="translate(1445.74 938.20) rotate(-30) scale(.9 1)" text-anchor="end" font-size="10.4" fill="#222">20 Sep 26</text><text transform="translate(1478.42 938.20) rotate(-30) scale(.9 1)" text-anchor="end" font-size="10.4" fill="#222">20 Sep 29</text><text transform="translate(1511.09 938.20) rotate(-30) scale(.9 1)" text-anchor="end" font-size="10.4" fill="#222">20 Oct 02</text><text transform="translate(1543.77 938.20) rotate(-30) scale(.9 1)" text-anchor="end" font-size="10.4" fill="#222">20 Oct 05</text><text transform="translate(1576.44 938.20) rotate(-30) scale(.9 1)" text-anchor="end" font-size="10.4" fill="#222">20 Oct 08</text><text transform="translate(1609.12 938.20) rotate(-30) scale(.9 1)" text-anchor="end" font-size="10.4" fill="#222">20 Oct 11</text><text transform="translate(1641.79 938.20) rotate(-30) scale(.9 1)" text-anchor="end" font-size="10.4" fill="#222">20 Oct 14</text><text transform="translate(1674.47 938.20) rotate(-30) scale(.9 1)" text-anchor="end" font-size="10.4" fill="#222">20 Oct 17</text><text transform="translate(1707.14 938.20) rotate(-30) scale(.9 1)" text-anchor="end" font-size="10.4" fill="#222">20 Oct 20</text><text transform="translate(1739.82 938.20) rotate(-30) scale(.9 1)" text-anchor="end" font-size="10.4" fill="#222">20 Oct 23</text><text transform="translate(1772.49 938.20) rotate(-30) scale(.9 1)" text-anchor="end" font-size="10.4" fill="#222">20 Oct 26</text><text transform="translate(1805.17 938.20) rotate(-30) scale(.9 1)" text-anchor="end" font-size="10.4" fill="#222">20 Oct 29</text><text transform="translate(965.10 972.20) scale(.9 1)" text-anchor="middle" font-size="10.4" font-style="italic" fill="#222">Days</text></svg>
<div style="left:0px;top:1018.2px;width:1940px;height:45.8px;background:#2f4f88;"></div>
<span id="t45" class="t" style="left:38.6px;top:1038.22px;font-size:11.5px;color:#dde4f0;transform:scaleX(0.8838);transform-origin:0 0;">2020 &copy; AI Field Management</span>
<span id="t46" class="t" style="left:38.6px;top:1053.90px;font-size:13px;color:#fff;font-weight:700;letter-spacing:0.011px;text-decoration:underline;text-decoration-thickness:1.1px;text-underline-offset:1.2px;-webkit-text-stroke:.3px #fff;">Contact AI-FM (Info@AIFieldManagement.com)</span>
</div></body></html>
